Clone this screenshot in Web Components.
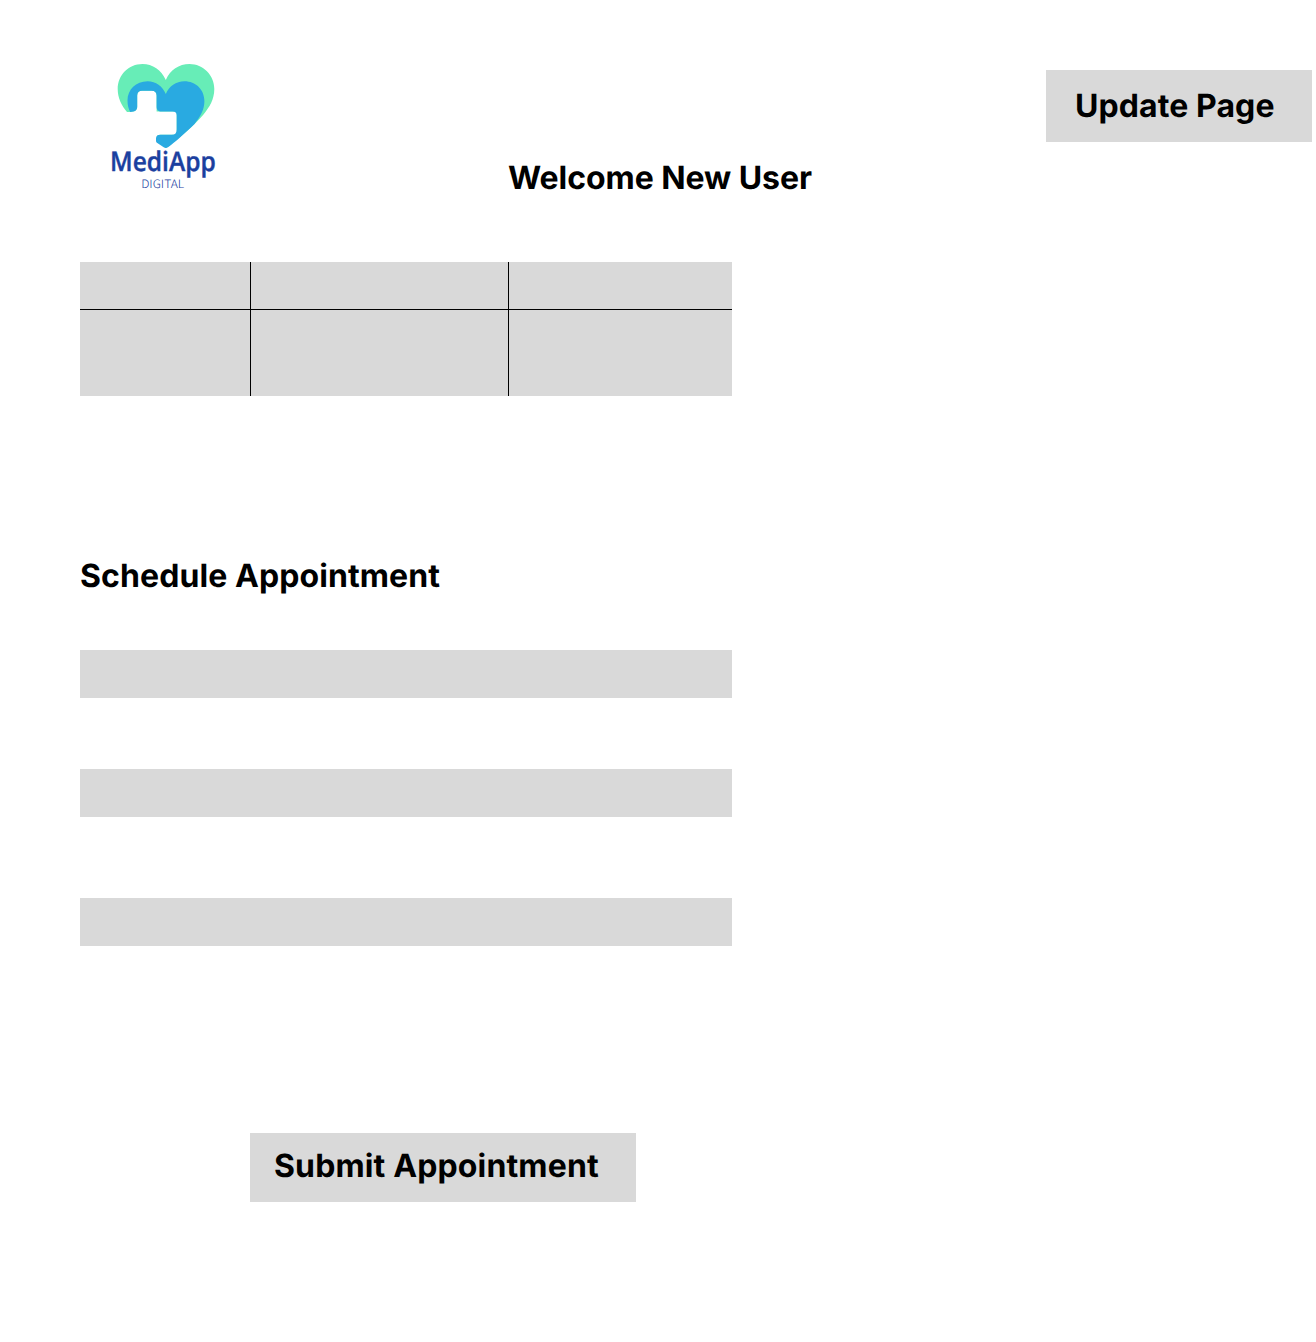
<!DOCTYPE html>
<html lang="en">
<head>
<meta charset="utf-8">
<title>MediApp Digital</title>
<style>
html,body{margin:0;background:#fff;color:#000}
body{font:700 32px/39px Inter,sans-serif;text-rendering:geometricPrecision}
</style>
</head>
<body>
<medi-page></medi-page>
<script>
const define = (name, html) => {
  const template = document.createElement('template');
  template.innerHTML = html;
  customElements.define(name, class extends HTMLElement {
    constructor() {
      super();
      this.attachShadow({ mode: 'open' }).append(template.content.cloneNode(true));
    }
  });
};

define('medi-logo', `
<style>
:host{display:block;width:120px;height:140px}
svg{display:block}
text{fill:#1b409f}
.name{font-family:"Open Sans","Noto Sans",sans-serif;font-size:27px;font-weight:600;stroke:#1b409f;stroke-width:.4}
.sub{font-family:"Noto Sans CJK SC","Noto Sans",sans-serif;font-size:11.5px;font-weight:300}
</style>
<svg width="120" height="140" viewBox="105 55 120 140">
  <path fill="#67edb7" d="M165.800 80C161.500 70 152.500 64 142.500 64C128.500 64 117.700 75 117.700 89C117.700 98 121.500 105.500 127 112H137L166 148C178 139 194 126 203.500 114.500C209.500 107 214.300 99.500 214.300 89C214.300 75 203 64 189.500 64C179 64 170 70 165.800 80Z"/>
  <path fill="#fff" d="M130.200 112C134.500 111.800 137.200 110.500 137.200 106.500V95.500C137.200 92.200 139 90.700 142 90.700H151.500C155 90.700 156.600 92.300 156.600 95.500V111.500H176.700V134.700H160.500C157.300 134.700 156 136 156 138.500V142L164 148H130Z"/>
  <path fill="#29aae1" d="M165.800 94C162.500 86 156 81.200 147.500 81.200C136 81.200 127.500 89.500 127.500 100.500C127.500 105 128.500 109 130.200 112C134.500 111.800 137.200 110.500 137.200 106.500V95.500C137.200 92.200 139 90.700 142 90.700H151.500C155 90.700 156.600 92.300 156.600 95.500V106.500C156.600 110 158.100 111.500 161.500 111.500H172.500C175.500 111.500 176.700 113 176.700 115.500V129.500C176.700 133 175.200 134.700 171.800 134.700H160.500C157.300 134.700 156 136 156 138.500V140.500C156 141.700 156.300 142.300 157.300 143L163.700 147.300Q165.800 148.700 168 147.200C175 142.500 185 133 194.500 124C200 117 204.400 110 204.400 101C204.400 89.500 195.500 81.200 184.500 81.200C176 81.200 169 86 165.800 94Z"/>
  <text class="name" x="110" y="171" textLength="105.800" lengthAdjust="spacingAndGlyphs">MediApp</text>
  <text class="sub" x="141.200" y="188.300" textLength="43" lengthAdjust="spacingAndGlyphs">DIGITAL</text>
</svg>`);

define('medi-heading', `
<style>:host{display:block;white-space:nowrap}h2{margin:0;font:inherit}</style>
<h2><slot></slot></h2>`);

define('medi-button', `
<style>
:host{display:block;box-sizing:border-box}
button{display:flex;align-items:flex-start;box-sizing:border-box;width:100%;height:100%;border:0;margin:0;padding:var(--pad);background:#d9d9d9;color:inherit;font:inherit;letter-spacing:inherit;text-rendering:inherit;text-align:left;white-space:nowrap}
</style>
<button type="button"><slot></slot></button>`);

define('medi-field', `
<style>:host{display:block;height:48px}input{display:block;box-sizing:border-box;width:100%;height:100%;border:0;border-radius:0;padding:0 16px;background:#d9d9d9;font:inherit;outline:0}</style>
<input type="text">`);

define('medi-table', `
<style>
:host{display:grid;width:652px;height:134px;grid-template:47px 86px / 170px 257px 223px;gap:1px;background:#000}
div{background:#d9d9d9}
</style>
<div></div><div></div><div></div><div></div><div></div><div></div>`);

define('medi-page', `
<style>
:host{display:flex;flex-direction:column;box-sizing:border-box;width:1316px;height:1342px;padding:55px 4px 0 80px}
header{display:flex;align-items:flex-start;height:207px}
medi-logo{margin-left:25px}
.welcome{margin:103px 0 0 283px;letter-spacing:-.06px}
.update{width:266px;height:72px;margin:15px 0 0 auto;--pad:16px 0 0 29px;letter-spacing:.09px}
.schedule{margin-top:160px;letter-spacing:.09px}
form{display:flex;flex-direction:column;width:652px;margin-top:55px}
medi-field+medi-field{margin-top:71px}
medi-field+medi-field+medi-field{margin-top:81px}
.submit{width:386px;height:69px;margin:187px 0 0 170px;--pad:13px 0 0 24px;letter-spacing:.14px}
</style>
<header>
  <medi-logo></medi-logo>
  <medi-heading class="welcome">Welcome New User</medi-heading>
  <medi-button class="update">Update Page</medi-button>
</header>
<medi-table></medi-table>
<medi-heading class="schedule">Schedule Appointment</medi-heading>
<form>
  <medi-field></medi-field>
  <medi-field></medi-field>
  <medi-field></medi-field>
  <medi-button class="submit">Submit Appointment</medi-button>
</form>`);
</script>
</body>
</html>
